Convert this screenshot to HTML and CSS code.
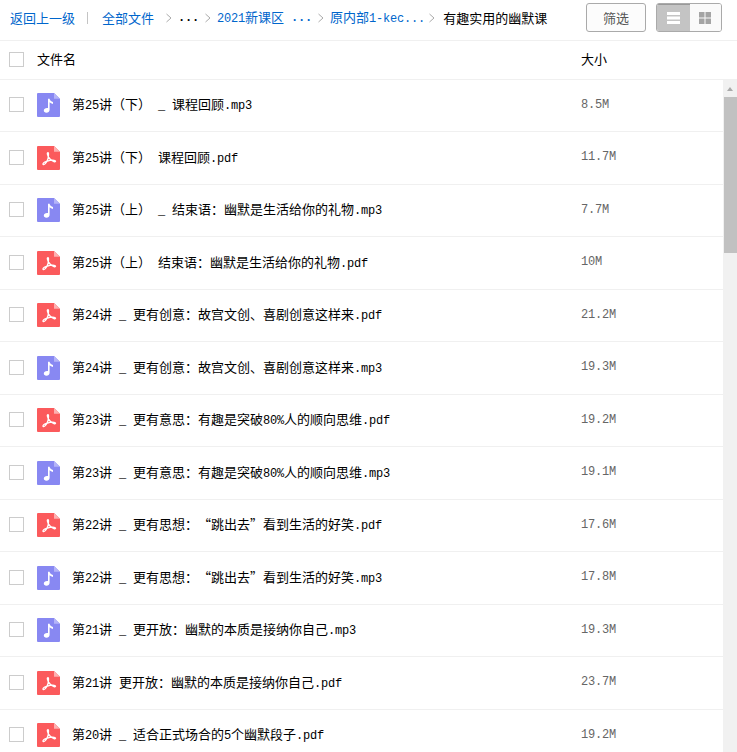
FILE: index.html
```html
<!DOCTYPE html>
<html lang="zh">
<head>
<meta charset="utf-8">
<title>有趣实用的幽默课</title>
<link rel="stylesheet" href="styles.css">
</head>
<body>
<div class="toolbar">
  <nav class="crumbs">
    <a class="back">返回上一级</a><span class="bar"></span><a class="all">全部文件</a><svg class="chev" viewBox="0 0 6 10"><path d="M.5 1l4.500 4-4.500 4"/></svg><span class="dots l">...</span><svg class="chev" viewBox="0 0 6 10"><path d="M.5 1l4.500 4-4.500 4"/></svg><a><span class="l">2021</span>新课区</a><a class="more l">...</a><svg class="chev" viewBox="0 0 6 10"><path d="M.5 1l4.500 4-4.500 4"/></svg><a>原内部<span class="l">1-kec...</span></a><svg class="chev last" viewBox="0 0 6 10"><path d="M.5 1l4.500 4-4.500 4"/></svg><span class="current">有趣实用的幽默课</span>
  </nav>
  <button class="filter">筛选</button>
  <div class="toggle">
    <span class="tog on"><svg width="13" height="12" viewBox="0 0 13 12"><path fill="#fff" d="M0 0h13v3H0zM0 4.500h13v3H0zM0 9h13v3H0z"/></svg></span>
    <span class="tog"><svg width="12" height="12" viewBox="0 0 12 12"><path fill="#a4a4a4" d="M0 0h5.500v5.500H0zM6.500 0H12v5.500H6.500zM0 6.500h5.500V12H0zM6.500 6.500H12V12H6.500z"/></svg></span>
  </div>
</div>
<div class="head">
  <span class="check"></span><span class="hname">文件名</span><span class="hsize">大小</span>
</div>
<div class="main">
  <div class="list">
    <div class="row"><span class="check"></span><svg class="ico"><use href="#mp3"/></svg><span class="name">第<span class="l">25</span>讲（下）<span class="l"> _ </span>课程回顾<span class="l">.mp3</span></span><span class="size l">8.5M</span></div>
    <div class="row"><span class="check"></span><svg class="ico"><use href="#pdf"/></svg><span class="name">第<span class="l">25</span>讲（下）<span class="l"> </span>课程回顾<span class="l">.pdf</span></span><span class="size l">11.7M</span></div>
    <div class="row"><span class="check"></span><svg class="ico"><use href="#mp3"/></svg><span class="name">第<span class="l">25</span>讲（上）<span class="l"> _ </span>结束语：幽默是生活给你的礼物<span class="l">.mp3</span></span><span class="size l">7.7M</span></div>
    <div class="row"><span class="check"></span><svg class="ico"><use href="#pdf"/></svg><span class="name">第<span class="l">25</span>讲（上）<span class="l"> </span>结束语：幽默是生活给你的礼物<span class="l">.pdf</span></span><span class="size l">10M</span></div>
    <div class="row"><span class="check"></span><svg class="ico"><use href="#pdf"/></svg><span class="name">第<span class="l">24</span>讲<span class="l"> _ </span>更有创意：故宫文创、喜剧创意这样来<span class="l">.pdf</span></span><span class="size l">21.2M</span></div>
    <div class="row"><span class="check"></span><svg class="ico"><use href="#mp3"/></svg><span class="name">第<span class="l">24</span>讲<span class="l"> _ </span>更有创意：故宫文创、喜剧创意这样来<span class="l">.mp3</span></span><span class="size l">19.3M</span></div>
    <div class="row"><span class="check"></span><svg class="ico"><use href="#pdf"/></svg><span class="name">第<span class="l">23</span>讲<span class="l"> _ </span>更有意思：有趣是突破<span class="l">80%</span>人的顺向思维<span class="l">.pdf</span></span><span class="size l">19.2M</span></div>
    <div class="row"><span class="check"></span><svg class="ico"><use href="#mp3"/></svg><span class="name">第<span class="l">23</span>讲<span class="l"> _ </span>更有意思：有趣是突破<span class="l">80%</span>人的顺向思维<span class="l">.mp3</span></span><span class="size l">19.1M</span></div>
    <div class="row"><span class="check"></span><svg class="ico"><use href="#pdf"/></svg><span class="name">第<span class="l">22</span>讲<span class="l"> _ </span>更有思想：<span class="q open">“</span>跳出去<span class="q">”</span>看到生活的好笑<span class="l">.pdf</span></span><span class="size l">17.6M</span></div>
    <div class="row"><span class="check"></span><svg class="ico"><use href="#mp3"/></svg><span class="name">第<span class="l">22</span>讲<span class="l"> _ </span>更有思想：<span class="q open">“</span>跳出去<span class="q">”</span>看到生活的好笑<span class="l">.mp3</span></span><span class="size l">17.8M</span></div>
    <div class="row"><span class="check"></span><svg class="ico"><use href="#mp3"/></svg><span class="name">第<span class="l">21</span>讲<span class="l"> _ </span>更开放：幽默的本质是接纳你自己<span class="l">.mp3</span></span><span class="size l">19.3M</span></div>
    <div class="row"><span class="check"></span><svg class="ico"><use href="#pdf"/></svg><span class="name">第<span class="l">21</span>讲<span class="l"> </span>更开放：幽默的本质是接纳你自己<span class="l">.pdf</span></span><span class="size l">23.7M</span></div>
    <div class="row"><span class="check"></span><svg class="ico"><use href="#pdf"/></svg><span class="name">第<span class="l">20</span>讲<span class="l"> _ </span>适合正式场合的<span class="l">5</span>个幽默段子<span class="l">.pdf</span></span><span class="size l">19.2M</span></div>
  </div>
  <div class="scrollbar">
    <div class="arrow"></div>
    <div class="thumb"></div>
  </div>
</div>
<svg class="defs" width="0" height="0">
  <defs>
    <symbol id="mp3" viewBox="0 0 23 25" preserveAspectRatio="none">
      <path fill="#8888f2" d="M1 0h16l6 6v18a1 1 0 0 1-1 1H1a1 1 0 0 1-1-1V1a1 1 0 0 1 1-1z"/>
      <path fill="#b4b4f8" d="M17 0l6 6h-6z"/>
      <path fill="#fff" d="M11 6h1.600c.3 2 1.600 2.600 3.400 3.400v2c-1.500-.3-2.600-.9-3.400-1.700V17.500c0 1.900-1.500 3-3.200 3-1.500 0-2.600-.9-2.600-2.300 0-1.500 1.500-2.700 3.200-2.700.4 0 .7 0 1 .2z"/>
    </symbol>
    <symbol id="pdf" viewBox="0 0 23 25" preserveAspectRatio="none">
      <path fill="#fb5a5c" d="M1 0h16l6 6v18a1 1 0 0 1-1 1H1a1 1 0 0 1-1-1V1a1 1 0 0 1 1-1z"/>
      <path fill="#fdb0b0" d="M17 0l6 6h-6z"/>
      <path fill="none" stroke="#fff" stroke-width="1.300" d="M11 7c-.5 0-.8.500-.6 1.500.4 2.200 2.800 6 6.600 7.800 1.300.5 2-.4 1.200-1-1.300-.8-5-.5-8.600.7-2.300.8-3.800 2.300-3.600 3 .3.800 1.500.2 2.500-1 1.700-2 3-5.500 3-9.500 0-1-.1-1.500-.5-1.500z"/>
    </symbol>
  </defs>
</svg>
</body>
</html>
```
FILE: styles.css
```css
* { box-sizing: border-box; }
html, body { margin: 0; padding: 0; height: 100%; }
body {
  width: 737px;
  height: 752px;
  overflow: hidden;
  background: #fff;
  color: #000;
  font: 13px/1 "Noto Sans CJK SC", sans-serif;
}
.l {
  font-family: "Liberation Mono", monospace;
  font-size: 12px;
  letter-spacing: -.2px;
  white-space: pre;
}
.q { display: inline-block; width: 13px; }
.q.open { text-align: right; }
.defs { position: absolute; }
.toolbar {
  display: flex;
  align-items: center;
  height: 41px;
  padding: 0 15px 5px 10px;
  border-bottom: 1px solid #f0f0f0;
}
.crumbs { display: flex; align-items: center; flex: 1; min-width: 0; color: #06c; white-space: nowrap; }
.bar { width: 1px; height: 12px; background: #c4c4c4; margin: 0 14px 0 12px; }
.chev { width: 6px; height: 10px; flex: none; margin: 0 6px; fill: none; stroke: #aaa; }
.all { margin-right: 6px; }
.dots { color: #000; font-weight: bold; }
.more { margin-left: 7px; font-weight: bold; }
.chev.last { margin: 0 8px 0 4px; }
.current { color: #000; }
.filter {
  width: 60px; height: 29px;
  margin-right: 10px;
  padding: 0;
  background: #fcfcfc;
  border: 1px solid #aaa;
  border-radius: 3px;
  color: #555;
  font: inherit;
}
.toggle {
  display: flex;
  width: 66px; height: 29px;
  border: 1px solid #aaa;
  border-radius: 3px;
  overflow: hidden;
}
.tog { width: 32px; display: flex; align-items: center; justify-content: center; background: #fafafa; }
.tog.on { width: 33px; background: #c4c4c4; border-top: 1px solid #999; }
.head {
  display: flex;
  align-items: center;
  height: 38.5px;
  padding-left: 9px;
  border-bottom: 1px solid #f0f0f0;
}
.check { width: 15px; height: 15px; flex: none; margin-bottom: 1.5px; border: 1px solid #ccc; background: #fff; }
.hname { margin-left: 13px; margin-bottom: 2px; }
.hsize { margin-left: 505px; margin-bottom: 2px; }
.main { display: flex; height: 673px; overflow: hidden; }
.list { flex: 1; min-width: 0; }
.row {
  display: flex;
  align-items: center;
  height: 52.5px;
  padding-left: 9px;
  border-bottom: 1px solid #f0f0f0;
}
.ico { width: 23px; height: 24px; flex: none; margin-left: 13px; }
.name { width: 509px; margin-left: 12px; margin-bottom: 1px; white-space: pre; }
.size { color: #666; margin-bottom: 1px; }
.scrollbar { width: 14px; flex: none; background: #f1f1f1; display: flex; flex-direction: column; }
.arrow { height: 17px; position: relative; }
.arrow::before {
  content: "";
  position: absolute; left: 4px; top: 7px;
  border: 3px solid transparent; border-top: 0;
  border-bottom: 4px solid #aaa;
}
.thumb { height: 156px; background: #c1c1c1; margin-left: 1px; }
```
